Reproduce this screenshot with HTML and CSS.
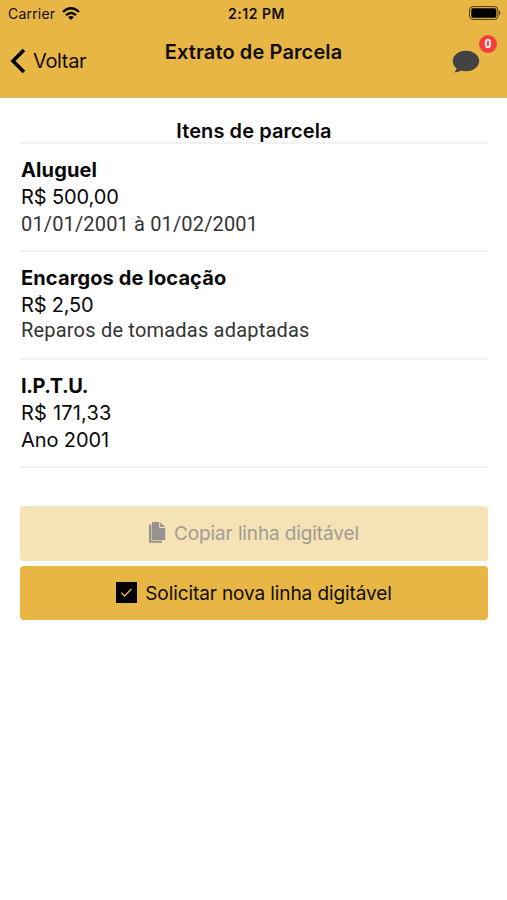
FILE: index.html
```html
<!DOCTYPE html>
<html lang="pt-BR">
<head>
<meta charset="utf-8">
<title>Extrato de Parcela</title>
<link rel="stylesheet" href="styles.css">
</head>
<body>
<header class="header">
  <div class="status">
    <div class="status-left"><span class="carrier">Carrier</span>
      <svg class="wifi" viewBox="0 0 18 13" width="18" height="13"><g fill="none" stroke="#000" stroke-width="2.3"><path d="M1 5 Q9 -2.4 17 5"/><path d="M4 8.2 Q9 3.7 14 8.2"/></g><path d="M6.2 10.2 Q9 7.8 11.8 10.2 L9 13Z"/></svg>
    </div>
    <span class="clock">2:12 PM</span>
    <svg class="battery" viewBox="0 0 33 14" width="33" height="14"><rect x=".6" y=".6" width="28.3" height="12.8" rx="3.4" fill="none" stroke="#493914" stroke-width="1"/><rect x="2.3" y="2.3" width="25" height="9.4" rx="1.6"/><path d="M30.2 4.6 Q32.8 7 30.2 9.4Z" fill="#493914"/></svg>
  </div>
  <nav class="nav">
    <a class="back"><svg viewBox="0 0 16 26" width="16" height="26"><path d="M14 2 L3 13 L14 24" fill="none" stroke="#000" stroke-width="3.6"/></svg><span class="back-text">Voltar</span></a>
    <h1 class="title"><span>Extrato de Parcela</span></h1>
    <div class="chat">
      <svg viewBox="0 0 28 23" width="28" height="23"><path d="M14 .8C6.700.8.8 5.300.8 11c0 3.300 1.600 5.800 3.800 7.600-.3 1.600-1.200 2.700-2.600 3.700 3 .2 5.400-.8 6.900-1.800 1.600.4 3.300.7 5.100.7 7.300 0 13.200-4.500 13.200-10.200S21.300.8 14 .8Z" fill="#424242"/></svg>
      <span class="badge">0</span>
    </div>
  </nav>
</header>
<main class="content">
  <h2 class="heading"><span class="heading-text">Itens de parcela</span></h2>
  <section class="item"><h3 class="name n1">Aluguel</h3><p class="value v1">R$ 500,00</p><p class="note date">01/01/2001 à 01/02/2001</p></section>
  <section class="item"><h3 class="name n2">Encargos de locação</h3><p class="value v2">R$ 2,50</p><p class="note repair">Reparos de tomadas adaptadas</p></section>
  <section class="item"><h3 class="name n3">I.P.T.U.</h3><p class="value v3">R$ 171,33</p><p class="value year">Ano 2001</p></section>
  <div class="actions">
    <button class="button disabled" disabled><svg viewBox="0 0 17 21" width="17" height="21"><path d="M0 2.500H2.300V18.700H13V20.700H0Z"/><path d="M2.900 0H10.200V5.900H16.200V18.100H2.900Z"/><path d="M11.200.2 16.100 5H11.200Z"/></svg><span class="copy-text">Copiar linha digitável</span></button>
    <button class="button"><svg viewBox="0 0 21 21" width="21" height="21"><path d="M0 0H21V21H0Z"/><path d="M5.200 10.800 8.600 14 15.400 7" fill="none" stroke="#e7b644" stroke-width="1.400"/></svg><span class="new-text">Solicitar nova linha digitável</span></button>
  </div>
</main>
</body>
</html>
```
FILE: styles.css
```css
* { box-sizing: border-box; }
body { margin: 0; background: #fff; color: #080808; font-family: Inter, "Liberation Sans", sans-serif; }
h1, h2, h3, p { margin: 0; }
svg { display: block; flex: none; }
.header { height: 98px; background: #e7b644; border-bottom: 1px solid #dab564; color: #100c03; }
.status { height: 27px; padding: 0 5px 0 8px; display: grid; grid-template-columns: 1fr auto 1fr; align-items: center; }
.status-left { display: flex; align-items: center; gap: 7px; font-size: 14px; }
.carrier { letter-spacing: 0.2px; }
.clock { padding-left: 3px; font-size: 14px; font-weight: 600; letter-spacing: 0.5px; }
.battery { justify-self: end; margin-top: -1px; }
.nav { height: 70px; display: grid; grid-template-columns: 1fr auto 1fr; padding: 0 10px; }
.back { display: flex; align-items: center; gap: 7px; height: 67px; font-size: 20px; }
.back-text { letter-spacing: -0.35px; }
.title { padding-top: 11px; font-size: 20px; line-height: 28px; font-weight: 600; letter-spacing: 0.12px; }
.chat { justify-self: end; position: relative; margin: 23px 17px 0 0; height: 23px; }
.badge { position: absolute; left: 27px; top: -15px; width: 18px; height: 18px; border-radius: 50%; background: #f53d3d; color: #fff; font: 700 12px/18px Roboto, sans-serif; text-align: center; }
.content { padding: 19px 19px 0 20px; }
.heading { height: 27px; border-bottom: 2px solid #f1f1f1; font-size: 20px; line-height: 28px; font-weight: 600; text-align: center; }
.heading-text { letter-spacing: 0.08px; }
.item { height: 108px; padding: 13px 1px 0; border-bottom: 2px solid #f1f1f1; font-size: 20px; line-height: 27px; }
.name { font-size: 20px; line-height: 27px; font-weight: 700; }
.n1 { letter-spacing: 0.12px; }
.n2 { letter-spacing: 0.12px; }
.n3 { letter-spacing: -0.45px; }
.v1 { letter-spacing: -0.1px; }
.v2 { letter-spacing: -0.2px; }
.v3 { letter-spacing: 0.2px; }
.year { letter-spacing: -0.1px; }
.note { font-family: Roboto, sans-serif; color: #333; }
.date { letter-spacing: 0.15px; }
.repair { line-height: 23px; letter-spacing: 0.2px; }
.actions { display: flex; flex-direction: column; gap: 5px; margin: 38px 0 0; }
.button { height: 54.5px; width: 100%; border: 0; padding: 0; border-radius: 4px; background: #e7b644; color: #100c03; font: 400 19px/24px Inter, sans-serif; display: flex; align-items: center; justify-content: center; gap: 8px; }
.button span { padding-top: 2px; }
.copy-text { letter-spacing: -0.12px; }
.new-text { letter-spacing: -0.1px; }
.disabled { background: #f5e2b5; color: #a39b94; fill: #96928f; }
.disabled svg { margin-top: -1px; }
```
